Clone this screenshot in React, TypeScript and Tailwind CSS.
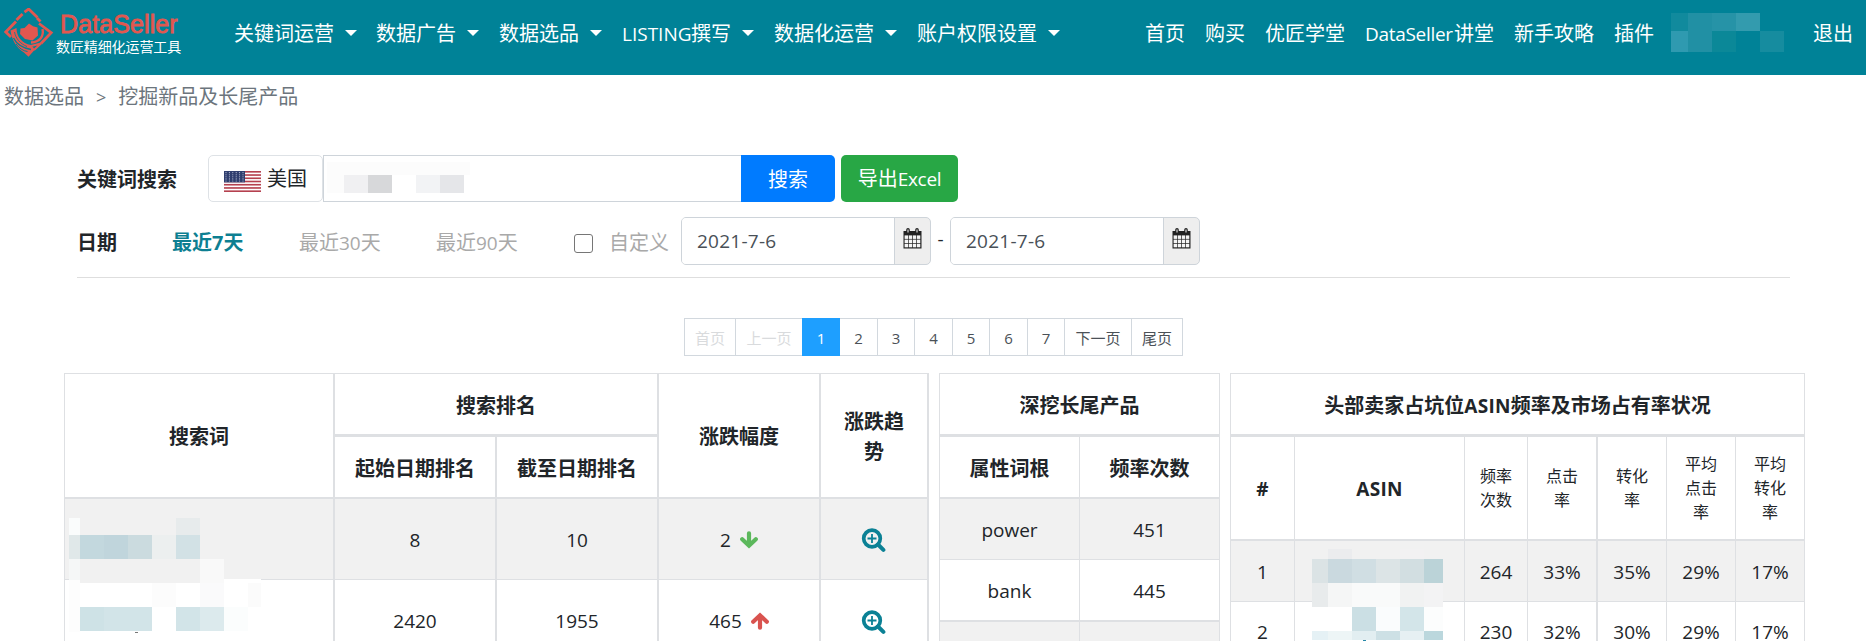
import React from "react";

const SANS = "font-['Open_Sans','Noto_Sans_CJK_SC',sans-serif]";

type Px = [number, number, number, number, string];

function Mosaic({ cells, w, h, className }: { cells: Px[]; w: number; h: number; className: string }) {
  return (
    <svg width={w} height={h} className={`absolute ${className}`} shapeRendering="crispEdges">
      {cells.map((c, i) => (
        <rect key={i} x={c[0]} y={c[1]} width={c[2]} height={c[3]} fill={c[4]} />
      ))}
    </svg>
  );
}

function Logo() {
  return (
    <svg width="50" height="50" viewBox="0 0 50 50" className="shrink-0">
      <g fill="none" stroke="#e2574f" strokeWidth="2.8">
        <path d="M20.5 4.2 L24.7 1 L33.5 9.5" />
        <path d="M12.5 12 L18.5 6" />
        <path d="M12 13.5 L1.8 24 L7 29" />
        <path d="M33 10 L36.5 13.5" />
        <path d="M35 15.5 L47.2 24.6 L37 35.5" />
        <path d="M38.5 21 C40 28 36 34 27 34.5" strokeWidth="2.4" />
        <path d="M27 38 L37 35.5 L30 42" strokeWidth="2" />
      </g>
      <g fill="#e2574f">
        <path d="M25 15.5 L29 18.3 L33.5 19.5 L34 27.5 L28.5 32.5 L21 31 L16 26 L16.5 20.5 L20.5 20 Z" />
        <path d="M6.5 22.5 L12.5 20 C12.5 29 18 35.5 27 37 L31 41.5 L24.5 48.8 L20 44.5 C12 39.5 8 32 6.5 22.5 Z" />
      </g>
      <g fill="none" stroke="#008297" strokeWidth="1.4">
        <path d="M9.5 30 C13 37 18 40 27 41.5" />
        <path d="M10.5 24 C12 31 16 35.5 23 38.5" strokeWidth="0.8" />
        <path d="M12 36 C15 40 19 43 23.5 43.5" strokeWidth="1" />
      </g>
    </svg>
  );
}

function Caret() {
  return <span className="ml-[11px] mt-[-1px] h-0 w-0 border-x-[6px] border-t-[6px] border-x-transparent border-t-white" />;
}

const LEFT: { t: React.ReactNode; w: string }[] = [
  { t: "关键词运营", w: "w-[142px]" },
  { t: "数据广告", w: "w-[123px]" },
  { t: "数据选品", w: "w-[123px]" },
  { t: (<><span className="inline-block w-[69px] text-[19px]">LISTING</span>撰写</>), w: "w-[152px]" },
  { t: "数据化运营", w: "w-[143px]" },
  { t: "账户权限设置", w: "w-[150px]" },
];

const USER_PX: Px[] = [
  [0, 0, 17, 18, "#118a9d"], [17, 0, 24, 18, "#2190a4"], [41, 0, 24, 18, "#2693a7"], [65, 0, 24, 18, "#339bae"],
  [0, 18, 17, 21, "#2f9ab0"], [17, 18, 24, 21, "#2190a4"], [41, 18, 24, 21, "#0b8898"], [89, 18, 24, 21, "#168c9f"],
];

function Header() {
  return (
    <header className="flex h-[75px] items-center bg-[#008297] text-[20px] text-white">
      <div className="flex w-[234px] items-center pb-[9px] pl-[4px]">
        <Logo />
        <div className="flex flex-col pl-[2px]">
          <span className="pl-[4px] font-['Liberation_Sans',sans-serif] text-[25px] font-normal leading-[27px] tracking-[0.1px] text-[#e2574f] [-webkit-text-stroke:0.8px_#e2574f]">DataSeller</span>
          <span className="text-[14px] leading-[17px] tracking-[-0.1px]">数匠精细化运营工具</span>
        </div>
      </div>
      <nav className="flex h-[75px] items-center pb-[8px]">
        {LEFT.map((n, i) => (
          <span key={i} className={`flex items-center whitespace-nowrap ${n.w}`}><span>{n.t}</span><Caret /></span>
        ))}
      </nav>
      <nav className="ml-auto flex h-[75px] items-center gap-[20px] whitespace-nowrap pb-[8px] pr-[13px]">
        <span>首页</span>
        <span>购买</span>
        <span>优匠学堂</span>
        <span><span className="inline-block w-[89px] text-[19px] tracking-[-0.3px]">DataSeller</span>讲堂</span>
        <span>新手攻略</span>
        <span>插件</span>
        <span className="relative h-[39px] w-[119px]"><Mosaic cells={USER_PX} w={113} h={39} className="left-[-3px] top-[-1px]" /></span>
        <span>退出</span>
      </nav>
    </header>
  );
}

function Flag() {
  return (
    <svg width="37" height="21" viewBox="0 0 37 21" className="mt-[5px] shrink-0">
      <rect width="37" height="21" fill="#fff" />
      {[0, 1, 2, 3, 4, 5, 6].map((i) => (
        <rect key={i} y={i * 3.23} width="37" height="1.62" fill="#b5414f" />
      ))}
      <rect width="21" height="11.4" fill="#2f3e6e" />
      {[0, 1, 2, 3, 4].map((r) =>
        [0, 1, 2, 3, 4, 5].map((c) => (
          <circle key={`${r}-${c}`} cx={2 + c * 3.4} cy={1.6 + r * 2.1} r="0.55" fill="#c5cbe0" />
        )),
      )}
    </svg>
  );
}

function Calendar() {
  return (
    <svg width="19" height="21" viewBox="0 0 19 21">
      <path d="M0.5 3 H18.5 V20.5 H0.5 Z" fill="#222" />
      <path d="M3.2 1.7 a1.8 1.6 0 0 1 3.6 0 V5 H3.2 Z M12.2 1.7 a1.8 1.6 0 0 1 3.6 0 V5 H12.2 Z" fill="#222" />
      <path d="M4.5 1.5 h1 v3 h-1 Z M13.5 1.5 h1 v3 h-1 Z" fill="#fff" />
      {[0, 1, 2].map((r) =>
        [0, 1, 2, 3].map((c) => (
          <rect key={`${r}-${c}`} x={1.6 + c * 4.1} y={7.4 + r * 4.2} width="3.4" height="3.5" fill="#f4f4f4" />
        )),
      )}
    </svg>
  );
}

function DateBox() {
  return (
    <div className="flex h-[48px] w-[250px] rounded-[5px] border border-[#ced4da] bg-[#eee]">
      <div className="flex w-[213px] items-center rounded-l-[4px] border-r border-[#ced4da] bg-white pl-[15px] text-[19px] tracking-[0.25px] text-[#495057]">2021-7-6</div>
      <div className="flex flex-1 justify-center pt-[10px]"><Calendar /></div>
    </div>
  );
}

const QUERY_PX: Px[] = [
  [0, 0, 143, 13, "#fcfcfc"], [0, 13, 17, 18, "#fcfcfc"], [17, 13, 24, 18, "#f0f0f2"], [41, 13, 24, 18, "#d7d8da"],
  [89, 13, 24, 18, "#f2f3f5"], [113, 13, 24, 18, "#e5e6e9"],
];

function Filters() {
  return (
    <section className="ml-[77px] mr-[76px] mt-[42px] border-b border-[#dedede]">
      <div className="flex h-[47px] items-center">
        <span className="w-[131px] pt-[2px] text-[20px] font-bold">关键词搜索</span>
        <div className="flex h-[47px] w-[115px] items-center rounded-[5px] border border-[#dee2e6] pl-[15px] text-[20px]">
          <Flag /><span className="ml-[6px] pt-[1px]">美国</span>
        </div>
        <div className="relative h-[47px] w-[418px] border border-r-0 border-[#ced4da]">
          <Mosaic cells={QUERY_PX} w={143} h={31} className="left-[3px] top-[6px]" />
        </div>
        <button className="h-[47px] w-[94px] rounded-r-[5px] bg-[#007bff] pt-[2px] text-[20px] text-white">搜索</button>
        <button className="ml-[6px] h-[47px] w-[117px] rounded-[5px] bg-[#28a745] pt-[1px] text-[20px] text-white">导出<span className="text-[19px] tracking-[-0.3px]">Excel</span></button>
      </div>
      <div className="mb-[12px] mt-[15px] flex h-[48px] items-center text-[20px] text-[#a9a9a9]">
        <span className="w-[95px] pt-[3px] font-bold text-[#212529]">日期</span>
        <span className="w-[127px] pt-[3px] font-bold text-[#0d7f92]">最近7天</span>
        <span className="w-[137px] pt-[3px]">最近<span className="text-[19px]">30</span>天</span>
        <span className="w-[138px] pt-[3px]">最近<span className="text-[19px]">90</span>天</span>
        <span className="mt-1 h-[19px] w-[19px] rounded-[3px] border border-[#767676] bg-white" />
        <span className="ml-[16px] w-[72px] pt-[3px]">自定义</span>
        <DateBox />
        <span className="w-[19px] pb-1 text-center text-[19px] text-[#212529]">-</span>
        <DateBox />
      </div>
    </section>
  );
}

const PAGES: [string, string][] = [
  ["首页", "w-[51px] text-[#d9dbdd]"], ["上一页", "w-[66px] text-[#d9dbdd]"], ["1", "w-[38px] bg-[#1e9fff] text-white"],
  ["2", "w-[38px]"], ["3", "w-[37px]"], ["4", "w-[38px]"], ["5", "w-[37px]"], ["6", "w-[38px]"], ["7", "w-[37px]"],
  ["下一页", "w-[67px]"], ["尾页", "w-[51px]"],
];

function Pager() {
  return (
    <div className="ml-[684px] mt-[40px] flex h-[38px] w-[499px] border-l border-[#d2d8de] text-[15px] text-[#4b5157]">
      {PAGES.map(([t, c], i) => (
        <span key={i} className={`flex items-center justify-center border-y pt-[2px] ${i === 2 ? "border-[#1e9fff]" : "border-[#d2d8de]"} ${i === 1 || i === 2 ? "" : "border-r"} ${c}`}>{t}</span>
      ))}
    </div>
  );
}

function Cell({ className = "", children }: { className?: string; children?: React.ReactNode }) {
  return <div className={`flex items-center justify-center border-[#dee0e3] text-center ${className}`}>{children}</div>;
}

function Zoom() {
  return (
    <svg width="25" height="25" viewBox="0 0 25 25" className="mr-[2px] mt-[3px]">
      <circle cx="11" cy="10.5" r="8.3" fill="none" stroke="#0b8195" strokeWidth="3.7" />
      <path d="M17 16.5 L22.4 21.9" stroke="#0b8195" strokeWidth="4" strokeLinecap="round" />
      <path d="M11 6 V15 M6.5 10.5 H15.5" stroke="#0b8195" strokeWidth="1.8" />
    </svg>
  );
}

function Arrow({ up = false }: { up?: boolean }) {
  return (
    <svg width="18" height="18" viewBox="0 0 18 18" className={up ? "rotate-180" : ""}>
      <path d="M9 2.3 V13 M2.2 8.2 L9 14.7 L15.8 8.2" fill="none" stroke={up ? "#d9534f" : "#5cb85c"} strokeWidth="4.2" strokeLinecap="round" />
    </svg>
  );
}

const TERM_PX: Px[] = [
  [0, 0, 11, 17, "#fafcfc"], [107, 0, 24, 17, "#e7ebec"],
  [0, 17, 11, 24, "#e0e8e9"], [11, 17, 24, 24, "#c3d8de"], [35, 17, 24, 24, "#c0d5dc"], [59, 17, 24, 24, "#cbdbdf"],
  [83, 17, 24, 24, "#ecefef"], [107, 17, 24, 24, "#d2e1e5"],
  [0, 41, 11, 24, "#f5f7f7"], [11, 41, 120, 24, "#f1f1f1"], [131, 41, 24, 24, "#f9f9f9"],
  [0, 62, 11, 52, "#fdfdfd"], [11, 65, 72, 24, "#ffffff"], [83, 65, 24, 24, "#fcfcfc"], [107, 65, 24, 24, "#ffffff"],
  [131, 65, 24, 24, "#fafafb"], [155, 61, 37, 28, "#ffffff"], [179, 65, 13, 24, "#fbfbfb"],
  [11, 89, 24, 24, "#cee2e6"], [35, 89, 48, 24, "#d2e4e8"], [107, 89, 24, 24, "#d2e4e8"], [131, 89, 24, 24, "#dceaed"],
  [155, 89, 24, 24, "#fbfdfd"], [66, 114, 3, 1, "#777777"],
];

const ASIN_PX: Px[] = [
  [16, 0, 24, 10, "#ebecee"], [88, 0, 24, 10, "#f2f1f2"],
  [0, 10, 16, 24, "#dbe3e5"], [16, 10, 24, 24, "#cad9df"], [40, 10, 24, 24, "#d0dee3"], [64, 10, 24, 24, "#dce4e6"],
  [88, 10, 24, 24, "#d2dee1"], [112, 10, 19, 24, "#bbd3d8"],
  [0, 34, 16, 24, "#e8ebec"], [16, 34, 24, 24, "#f5f6f6"], [40, 34, 48, 24, "#f9fafa"], [88, 34, 24, 24, "#f1f2f2"], [112, 34, 19, 24, "#f3f3f4"],
  [0, 58, 40, 24, "#ffffff"], [40, 58, 24, 24, "#cbdfe4"], [64, 58, 24, 24, "#fafcfd"], [88, 58, 24, 24, "#d3e5e9"], [112, 58, 19, 24, "#fcfdfd"],
  [0, 82, 16, 9, "#e5f1f5"], [16, 82, 24, 9, "#edf5f6"], [40, 82, 24, 9, "#e2eef1"], [64, 82, 24, 9, "#cde0e5"],
  [88, 82, 24, 9, "#e6f0f3"], [112, 82, 19, 9, "#bbd7dd"], [51, 91, 3, 1, "#2688a8"],
];

function RankTable() {
  return (
    <div className="relative w-[865px] border-l border-t border-[#dee0e3]">
      <div className="grid grid-cols-[270px_162px_162px_162px_108px] grid-rows-[63px_62px_81px_82px]">
        <Cell className="row-span-2 border-b-2 border-r-2 pt-[3px] font-bold">搜索词</Cell>
        <Cell className="col-span-2 border-b-3 border-r-2 pt-[3px] font-bold">搜索排名</Cell>
        <Cell className="row-span-2 border-b-2 border-r-2 pt-[3px] font-bold">涨跌幅度</Cell>
        <Cell className="row-span-2 border-b-2 border-r-2 px-[22px] pt-[3px] font-bold leading-[30px]">涨跌趋势</Cell>
        <Cell className="border-b-2 border-r-2 pt-[3px] font-bold">起始日期排名</Cell>
        <Cell className="border-b-2 border-r-2 pt-[3px] font-bold">截至日期排名</Cell>
        <Cell className="border-b border-r-2 bg-[#f1f1f1]" />
        <Cell className="border-b border-r-2 bg-[#f1f1f1] pt-[2px] text-[19px]">8</Cell>
        <Cell className="border-b border-r-2 bg-[#f1f1f1] pt-[2px] text-[19px]">10</Cell>
        <Cell className="gap-[9px] border-b border-r-2 bg-[#f1f1f1] pt-[2px] text-[19px]">2<Arrow /></Cell>
        <Cell className="border-b border-r-2 bg-[#f1f1f1]"><Zoom /></Cell>
        <Cell className="border-r-2" />
        <Cell className="border-r-2 text-[19px]">2420</Cell>
        <Cell className="border-r-2 text-[19px]">1955</Cell>
        <Cell className="gap-[9px] border-r-2 text-[19px]">465<Arrow up /></Cell>
        <Cell className="border-r-2"><Zoom /></Cell>
      </div>
      <Mosaic cells={TERM_PX} w={192} h={116} className="left-[4px] top-[144px]" />
    </div>
  );
}

function RootTable() {
  return (
    <div className="ml-[10px] w-[281px] border-l border-t border-[#dee0e3]">
      <div className="grid grid-cols-[140px_140px] grid-rows-[63px_62px_61px_62px_60px]">
        <Cell className="col-span-2 border-b-3 border-r pt-[3px] font-bold">深挖长尾产品</Cell>
        <Cell className="border-b-2 border-r pt-[3px] font-bold">属性词根</Cell>
        <Cell className="border-b-2 border-r pt-[3px] font-bold">频率次数</Cell>
        <Cell className="border-b border-r bg-[#f1f1f1] pt-[2px] text-[19px]">power</Cell>
        <Cell className="border-b border-r bg-[#f1f1f1] pt-[2px] text-[19px]">451</Cell>
        <Cell className="border-b-2 border-r pt-[2px] text-[19px]">bank</Cell>
        <Cell className="border-b-2 border-r pt-[2px] text-[19px]">445</Cell>
        <Cell className="border-r bg-[#f1f1f1]" />
        <Cell className="border-r bg-[#f1f1f1]" />
      </div>
    </div>
  );
}

const HEADS = [["频率", "次数"], ["点击", "率"], ["转化", "率"], ["平均", "点击", "率"], ["平均", "转化", "率"]];
const ROWS = [["1", "264", "33%", "35%", "29%", "17%"], ["2", "230", "32%", "30%", "29%", "17%"]];

function SellerTable() {
  return (
    <div className="relative ml-[10px] w-[575px] border-l border-t border-[#dee0e3]">
      <div className="grid grid-cols-[64px_170px_63px_70px_69px_69px_69px] grid-rows-[63px_104px_61px_62px]">
        <Cell className="col-span-7 border-b-3 border-r pt-[3px] font-bold"><span>头部卖家占坑位<span className="text-[19px] tracking-[0.3px]">ASIN</span>频率及市场占有率状况</span></Cell>
        <Cell className="border-b-2 border-r pt-[3px] text-[19px] font-bold">#</Cell>
        <Cell className="border-b-2 border-r pt-[3px] text-[19px] font-bold tracking-[0.3px]">ASIN</Cell>
        {HEADS.map((h, i) => (
          <Cell key={i} className={`flex-col border-b-2 text-[16px] leading-[24px] ${i === 1 ? "border-r-2" : "border-r"}`}>
            {h.map((l) => <span key={l}>{l}</span>)}
          </Cell>
        ))}
        {ROWS.map((r, ri) =>
          [r[0], "", ...r.slice(1)].map((v, i) => (
            <Cell key={`${ri}-${i}`} className={`text-[19px] leading-[15px] ${ri === 0 ? "border-b bg-[#f1f1f1] pt-[2px]" : "pb-[1px]"} ${i === 3 ? "border-r-2" : "border-r"}`}>{v}</Cell>
          )),
        )}
      </div>
      <Mosaic cells={ASIN_PX} w={131} h={92} className="left-[81px] top-[175px]" />
    </div>
  );
}

export default function App() {
  return (
    <div className={`h-[641px] w-full overflow-hidden bg-white text-[#212529] ${SANS}`}>
      <Header />
      <div className="flex h-[38px] items-center pl-[4px] pt-[6px] text-[20px] text-[#6c757d]">
        <span>数据选品</span>
        <span className="mx-[12px] text-[18px]">&gt;</span>
        <span>挖掘新品及长尾产品</span>
      </div>
      <Filters />
      <Pager />
      <main className="ml-[64px] mt-[17px] flex w-[1741px] items-start text-[20px]">
        <RankTable />
        <RootTable />
        <SellerTable />
      </main>
    </div>
  );
}
